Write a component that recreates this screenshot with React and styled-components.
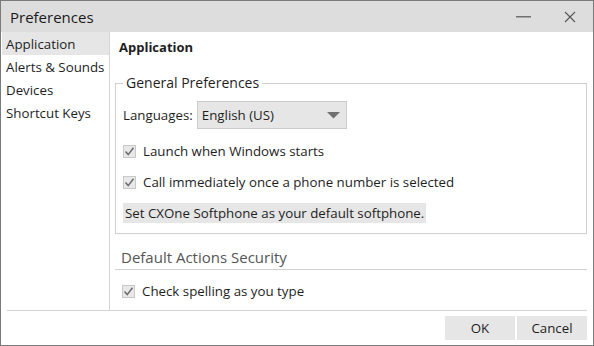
import React from 'react';
import styled, { createGlobalStyle } from 'styled-components';

const GlobalStyle = createGlobalStyle`
  html, body {
    margin: 0;
    padding: 0;
    background: #ffffff;
  }
  body {
    font-family: 'Open Sans', 'Noto Sans', sans-serif;
    color: #1e1e1e;
  }
`;

const Window = styled.div`
  width: 594px;
  height: 346px;
  box-sizing: border-box;
  border: 1px solid #7a7a7a;
  display: flex;
  flex-direction: column;
  background: #fff;
`;

const TitleBar = styled.div`
  height: 31px;
  background: #dddddd;
  display: flex;
  align-items: center;
  padding-left: 9px;
  flex-shrink: 0;
`;

const Title = styled.div`
  font-size: 15px;
  flex: 1;
  color: #1a1a1a;
`;

const WinButton = styled.div`
  width: 46px;
  height: 31px;
  display: flex;
  align-items: center;
  justify-content: center;
`;

const Body = styled.div`
  flex: 1;
  display: flex;
  min-height: 0;
`;

const Sidebar = styled.ul`
  list-style: none;
  margin: 0;
  padding: 0 0 0 1px;
  width: 107px;
  border-right: 1px solid #d4d4d4;
`;

const NavItem = styled.li`
  height: 23px;
  line-height: 24px;
  padding-left: 4px;
  font-size: 13.3px;
  background: ${p => (p.$active ? '#e6e6e6' : 'transparent')};
  white-space: nowrap;
`;

const Content = styled.div`
  flex: 1;
  padding: 0 6px 0 5px;
  display: flex;
  flex-direction: column;
`;

const Heading = styled.h1`
  margin: 6px 0 0 4px;
  font-size: 13px;
  font-weight: 700;
  line-height: 19px;
`;

const Group = styled.fieldset`
  margin: 17px 0 0;
  padding: 9px 0 10px 7px;
  border: 1px solid #cfcfcf;
  display: flex;
  flex-direction: column;
  align-items: flex-start;
`;

const Legend = styled.legend`
  font-size: 14px;
  padding: 0 3px;
  margin-left: 0;
  line-height: 18px;
`;

const Row = styled.div`
  display: flex;
  align-items: center;
  font-size: 13.3px;
  gap: 4px;
`;

const Select = styled.div`
  width: 150px;
  height: 28px;
  box-sizing: border-box;
  border: 1px solid #cccccc;
  background: #e6e6e6;
  display: flex;
  align-items: center;
  justify-content: space-between;
  padding: 0 6px 0 4px;
  font-size: 13.3px;
`;

const Check = styled.label`
  display: flex;
  align-items: center;
  gap: 7px;
  font-size: 13.3px;
  line-height: 18px;
  margin-top: ${p => p.$top}px;
  margin-left: ${p => p.$left || 0}px;
`;

const Box = styled.span`
  width: 13px;
  height: 13px;
  box-sizing: border-box;
  border: 1px solid #c8c8c8;
  background: #e8e8e8;
  display: flex;
  align-items: center;
  justify-content: center;
`;

const Notice = styled.div`
  margin-top: 12px;
  background: #e6e6e6;
  font-size: 13.3px;
  line-height: 20px;
  padding: 0 2px;
`;

const SectionTitle = styled.div`
  margin-top: 13px;
  padding: 0 0 2px 6px;
  font-size: 15px;
  color: #555555;
  line-height: 20px;
  border-bottom: 1px solid #d0d0d0;
`;

const Footer = styled.div`
  margin: 0 6px;
  border-top: 1px solid #d4d4d4;
  height: 35px;
  display: flex;
  justify-content: flex-end;
  align-items: flex-start;
  gap: 2px;
  padding-top: 5px;
  box-sizing: border-box;
`;

const Button = styled.button`
  width: 70px;
  height: 24px;
  border: none;
  background: #e6e6e6;
  font-family: inherit;
  font-size: 13.3px;
  color: #1e1e1e;
  padding: 0;
`;

const Tick = () => (
  <svg width="11" height="11" viewBox="0 0 11 11">
    <path d="M1.5 5.5 L4.2 8.6 L9.5 1.8" fill="none" stroke="#6b6b6b" strokeWidth="1.5" />
  </svg>
);

const Checkbox = ({ label, top, left }) => (
  <Check $top={top} $left={left}>
    <Box><Tick /></Box>
    {label}
  </Check>
);

export default function App() {
  return (
    <>
      <GlobalStyle />
      <Window>
        <TitleBar>
          <Title>Preferences</Title>
          <WinButton>
            <svg width="16" height="4" viewBox="0 0 16 4">
              <rect x="0" y="1" width="15" height="1.5" fill="#707070" />
            </svg>
          </WinButton>
          <WinButton>
            <svg width="12" height="12" viewBox="0 0 12 12">
              <path d="M1 1 L11 11 M11 1 L1 11" stroke="#555" strokeWidth="1.1" />
            </svg>
          </WinButton>
        </TitleBar>
        <Body>
          <Sidebar>
            <NavItem $active>Application</NavItem>
            <NavItem>Alerts &amp; Sounds</NavItem>
            <NavItem>Devices</NavItem>
            <NavItem>Shortcut Keys</NavItem>
          </Sidebar>
          <Content>
            <Heading>Application</Heading>
            <Group>
              <Legend>General Preferences</Legend>
              <Row>
                Languages:
                <Select>
                  English (US)
                  <svg width="13" height="7" viewBox="0 0 13 7">
                    <path d="M0 0 H13 L6.5 6.5 Z" fill="#707070" />
                  </svg>
                </Select>
              </Row>
              <Checkbox top={13} label="Launch when Windows starts" />
              <Checkbox top={13} label="Call immediately once a phone number is selected" />
              <Notice>Set CXOne Softphone as your default softphone.</Notice>
            </Group>
            <SectionTitle>Default Actions Security</SectionTitle>
            <Checkbox top={12} left={7} label="Check spelling as you type" />
          </Content>
        </Body>
        <Footer>
          <Button>OK</Button>
          <Button>Cancel</Button>
        </Footer>
      </Window>
    </>
  );
}
